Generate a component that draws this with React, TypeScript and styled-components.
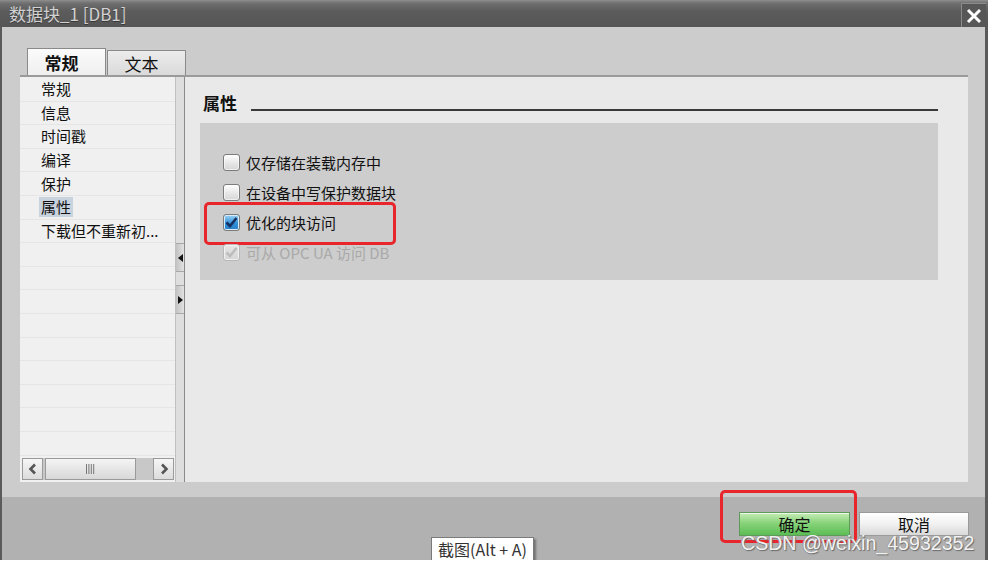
import styled, { createGlobalStyle } from "styled-components";

const FONT = `"Noto Sans CJK SC", "Liberation Sans", sans-serif`;

const GlobalStyle = createGlobalStyle`
  html, body {
    margin: 0;
    padding: 0;
    background: #ffffff;
  }
  body {
    font-family: ${FONT};
    color: #111;
  }
`;

const Window = styled.div`
  position: relative;
  width: 988px;
  height: 560px;
  display: flex;
  flex-direction: column;
  border-bottom: 6px solid #555;
  box-sizing: border-box;
`;

const TitleBar = styled.div`
  height: 27px;
  flex: none;
  display: flex;
  justify-content: space-between;
  align-items: stretch;
  background: linear-gradient(
    to bottom,
    #8e8e8e 0,
    #7a7a7a 2px,
    #6c6c6c 4px,
    #5c5c5c 11px,
    #555 100%
  );
`;

const Title = styled.div`
  padding-left: 9px;
  font-size: 17px;
  line-height: 27px;
  color: #d2d2d2;
  text-shadow: 0 1px 0 #3a3a3a;
`;

const CloseButton = styled.div`
  width: 24px;
  margin-top: 3px;
  margin-right: 2px;
  border-left: 1px solid #8a8a8a;
  border-top: 1px solid #8a8a8a;
  display: flex;
  align-items: center;
  justify-content: center;
  background: #575757;
`;

const Body = styled.div`
  flex: 1;
  display: flex;
  flex-direction: column;
  background: #cccccc;
  border-left: 2px solid #5a5a5a;
  border-right: 3px solid #5a5a5a;
`;

const Upper = styled.div`
  padding: 21px 17px 15px 18px;
  display: flex;
  flex-direction: column;
`;

const TabStrip = styled.div`
  height: 27px;
  display: flex;
  align-items: flex-end;
  padding-left: 7px;
  border-bottom: 2px solid #9a9a9a;
`;

const Tab = styled.div<{ $active?: boolean }>`
  width: 79px;
  height: ${(p) => (p.$active ? 27 : 25)}px;
  box-sizing: border-box;
  border: 1px solid #8a8a8a;
  border-bottom: none;
  padding-right: 10px;
  display: flex;
  align-items: center;
  justify-content: center;
  font-size: 17px;
  font-weight: ${(p) => (p.$active ? 700 : 400)};
  color: #111;
  background: ${(p) =>
    p.$active
      ? "linear-gradient(#fbfbfb, #efefef)"
      : "linear-gradient(#ececec, #dadada)"};
  margin-right: 1px;
`;

const Main = styled.div`
  height: 405px;
  display: flex;
`;

const Nav = styled.div`
  width: 155px;
  display: flex;
  flex-direction: column;
  background: #f0f0f0;
`;

const NavList = styled.div`
  flex: 1;
  overflow: hidden;
  padding-top: 1px;
`;

const NavRow = styled.div`
  height: 23.6px;
  box-sizing: border-box;
  border-bottom: 1px solid #e5e5e5;
  padding-left: 21px;
  display: flex;
  align-items: center;
  font-size: 15px;
  white-space: nowrap;
`;

const NavLabel = styled.span<{ $selected?: boolean }>`
  line-height: 20px;
  padding: 0 2px;
  margin-left: -2px;
  background: ${(p) => (p.$selected ? "#c8d3de" : "transparent")};
`;

const HScroll = styled.div`
  height: 22px;
  margin: 0 1px 2px 2px;
  display: flex;
  background: #c8c8c8;
`;

const ScrollButton = styled.div<{ $push?: boolean }>`
  width: 21px;
  box-sizing: border-box;
  border: 1px solid #9a9a9a;
  background: linear-gradient(#f6f6f6, #dcdcdc);
  display: flex;
  align-items: center;
  justify-content: center;
  margin-left: ${(p) => (p.$push ? "auto" : "0")};
`;

const Thumb = styled.div`
  width: 91px;
  margin-left: 2px;
  box-sizing: border-box;
  border: 1px solid #9a9a9a;
  background: linear-gradient(#f4f4f4, #d8d8d8);
  display: flex;
  align-items: center;
  justify-content: center;
`;

const Splitter = styled.div`
  width: 10px;
  box-sizing: border-box;
  border-left: 1px solid #c0c0c0;
  border-right: 1px solid #8a8a8a;
  background: #dedede;
  display: flex;
  flex-direction: column;
  padding-top: 166px;
  gap: 13px;
`;

const SplitButton = styled.div`
  height: 29px;
  box-sizing: border-box;
  border-top: 1px solid #a8a8a8;
  border-bottom: 1px solid #a8a8a8;
  background: linear-gradient(to right, #c2c2c2, #e2e2e2);
  display: flex;
  align-items: center;
  justify-content: center;
`;

const Content = styled.div`
  flex: 1;
  background: #e9e9e9;
  padding: 16px 30px 0 15px;
`;

const Header = styled.div`
  display: flex;
  align-items: flex-end;
  padding-left: 3px;
  gap: 14px;
`;

const HeaderTitle = styled.div`
  font-size: 17px;
  font-weight: 700;
  line-height: 20px;
`;

const HeaderRule = styled.div`
  flex: 1;
  height: 2px;
  margin-bottom: 2px;
  background: #3a3a3a;
`;

const OptionsBox = styled.div`
  margin-top: 10px;
  height: 157px;
  box-sizing: border-box;
  background: #cdcdcd;
  padding: 24px 0 0 23px;
  display: flex;
  flex-direction: column;
`;

const OptionRow = styled.div<{ $disabled?: boolean }>`
  position: relative;
  height: 30px;
  display: flex;
  align-items: center;
  gap: 6px;
  font-size: 15px;
  color: ${(p) => (p.$disabled ? "#a9a9a9" : "#111")};
`;

const CheckBox = styled.span<{ $checked?: boolean; $disabled?: boolean }>`
  width: 17px;
  height: 17px;
  box-sizing: border-box;
  border-radius: 3px;
  border: 1px solid ${(p) => (p.$disabled ? "#b8b8b8" : "#7c7c7c")};
  display: flex;
  align-items: center;
  justify-content: center;
  background: ${(p) =>
    p.$disabled
      ? "linear-gradient(#e6e6e6, #d6d6d6)"
      : p.$checked
      ? "linear-gradient(#9fd4f6, #2f8fd8 55%, #2a7fc8)"
      : "linear-gradient(#ffffff, #e4e4e4 60%, #d6d6d6)"};
  box-shadow: inset 0 0 0 1px
    ${(p) => (p.$checked && !p.$disabled ? "#d8ecfa" : "rgba(255,255,255,0.6)")};
`;

const Highlight = styled.div<{ $left: number; $top: number; $w: number; $h: number }>`
  position: absolute;
  left: ${(p) => p.$left}px;
  top: ${(p) => p.$top}px;
  width: ${(p) => p.$w}px;
  height: ${(p) => p.$h}px;
  box-sizing: border-box;
  border: 3px solid #e8252a;
  border-radius: 5px;
  pointer-events: none;
`;

const Footer = styled.div`
  position: relative;
  height: 53px;
  border-bottom: 4px solid #a5a5a5;
  background: #b1b1b1;
  display: flex;
  justify-content: flex-end;
  align-items: flex-start;
  padding: 15px 16px 0 0;
  gap: 9px;
`;

const ButtonWrap = styled.div`
  position: relative;
`;

const DialogButton = styled.div<{ $primary?: boolean }>`
  width: ${(p) => (p.$primary ? 111 : 110)}px;
  height: 24px;
  box-sizing: border-box;
  border: 1px solid ${(p) => (p.$primary ? "#5f9a5a" : "#9a9a9a")};
  display: flex;
  align-items: center;
  justify-content: center;
  font-size: 16px;
  color: #111;
  background: ${(p) =>
    p.$primary
      ? "linear-gradient(#c6ecb6, #88d47a 45%, #5dbd55)"
      : "linear-gradient(#ffffff, #f1f1f1 50%, #d9d9d9)"};
  box-shadow: inset 0 1px 0 rgba(255, 255, 255, 0.7);
`;

const Tooltip = styled.div`
  position: absolute;
  left: 431px;
  top: 537px;
  height: 24px;
  box-sizing: border-box;
  padding: 0 6px;
  border: 1px solid #7a7a7a;
  background: #fff;
  box-shadow: 2px 2px 2px rgba(0, 0, 0, 0.35);
  font-size: 16px;
  line-height: 22px;
  color: #333;
  white-space: nowrap;
  z-index: 2;
`;

const Watermark = styled.div`
  position: absolute;
  left: 741px;
  top: 531px;
  font-family: "Liberation Sans", Arial, sans-serif;
  font-size: 19.6px;
  line-height: 24px;
  color: #f2f2f2;
  text-shadow: 1px 1px 1px #6a6a6a, -1px 0 0 #9a9a9a;
  pointer-events: none;
  white-space: nowrap;
  z-index: 2;
`;

const navItems = ["常规", "信息", "时间戳", "编译", "保护", "属性", "下载但不重新初..."];

const options = [
  { label: "仅存储在装载内存中", checked: false, disabled: false },
  { label: "在设备中写保护数据块", checked: false, disabled: false },
  { label: "优化的块访问", checked: true, disabled: false, mark: true },
  { label: "可从 OPC UA 访问 DB", checked: true, disabled: true },
];

const Check = ({ color }: { color: string }) => (
  <svg width="13" height="12" viewBox="0 0 13 12">
    <path d="M1.5 6.5 L5 10 L11.5 2" fill="none" stroke={color} strokeWidth="2.6" strokeLinejoin="miter" />
  </svg>
);

const Chevron = ({ dir }: { dir: "left" | "right" }) => (
  <svg width="10" height="12" viewBox="0 0 10 12">
    <path
      d={dir === "left" ? "M7 1.5 L2.5 6 L7 10.5" : "M3 1.5 L7.5 6 L3 10.5"}
      fill="none"
      stroke="#555"
      strokeWidth="2.6"
    />
  </svg>
);

const Triangle = ({ dir }: { dir: "left" | "right" }) => (
  <svg width="5" height="8" viewBox="0 0 5 8">
    <path d={dir === "left" ? "M5 0 L0 4 L5 8 Z" : "M0 0 L5 4 L0 8 Z"} fill="#111" />
  </svg>
);

const App = () => {
  return (
    <>
      <GlobalStyle />
      <Window>
        <TitleBar>
          <Title>数据块_1 [DB1]</Title>
          <CloseButton>
            <svg width="18" height="18" viewBox="0 0 18 18">
              <path d="M3 3 L15 15 M15 3 L3 15" stroke="#fff" strokeWidth="3" />
            </svg>
          </CloseButton>
        </TitleBar>
        <Body>
          <Upper>
            <TabStrip>
              <Tab $active>常规</Tab>
              <Tab>文本</Tab>
            </TabStrip>
            <Main>
              <Nav>
                <NavList>
                  {navItems.map((item) => (
                    <NavRow key={item}>
                      <NavLabel $selected={item === "属性"}>{item}</NavLabel>
                    </NavRow>
                  ))}
                  {Array.from({ length: 10 }).map((_, i) => (
                    <NavRow key={"empty" + i} />
                  ))}
                </NavList>
                <HScroll>
                  <ScrollButton>
                    <Chevron dir="left" />
                  </ScrollButton>
                  <Thumb>
                    <svg width="9" height="10" viewBox="0 0 9 10">
                      <path d="M0.5 0 V10 M2.9 0 V10 M5.3 0 V10 M7.7 0 V10" stroke="#777" strokeWidth="1" />
                    </svg>
                  </Thumb>
                  <ScrollButton $push>
                    <Chevron dir="right" />
                  </ScrollButton>
                </HScroll>
              </Nav>
              <Splitter>
                <SplitButton>
                  <Triangle dir="left" />
                </SplitButton>
                <SplitButton>
                  <Triangle dir="right" />
                </SplitButton>
              </Splitter>
              <Content>
                <Header>
                  <HeaderTitle>属性</HeaderTitle>
                  <HeaderRule />
                </Header>
                <OptionsBox>
                  {options.map((o) => (
                    <OptionRow key={o.label} $disabled={o.disabled}>
                      <CheckBox $checked={o.checked} $disabled={o.disabled}>
                        {o.checked && <Check color={o.disabled ? "#bdbdbd" : "#15305e"} />}
                      </CheckBox>
                      {o.label}
                      {o.mark && <Highlight $left={-19} $top={-5} $w={192} $h={43} />}
                    </OptionRow>
                  ))}
                </OptionsBox>
              </Content>
            </Main>
          </Upper>
          <Footer>
            <ButtonWrap>
              <DialogButton $primary>确定</DialogButton>
              <Highlight $left={-19} $top={-22} $w={137} $h={53} />
            </ButtonWrap>
            <DialogButton>取消</DialogButton>
          </Footer>
        </Body>
        <Tooltip>截图(Alt + A)</Tooltip>
        <Watermark>CSDN @weixin_45932352</Watermark>
      </Window>
    </>
  );
};

export default App;
